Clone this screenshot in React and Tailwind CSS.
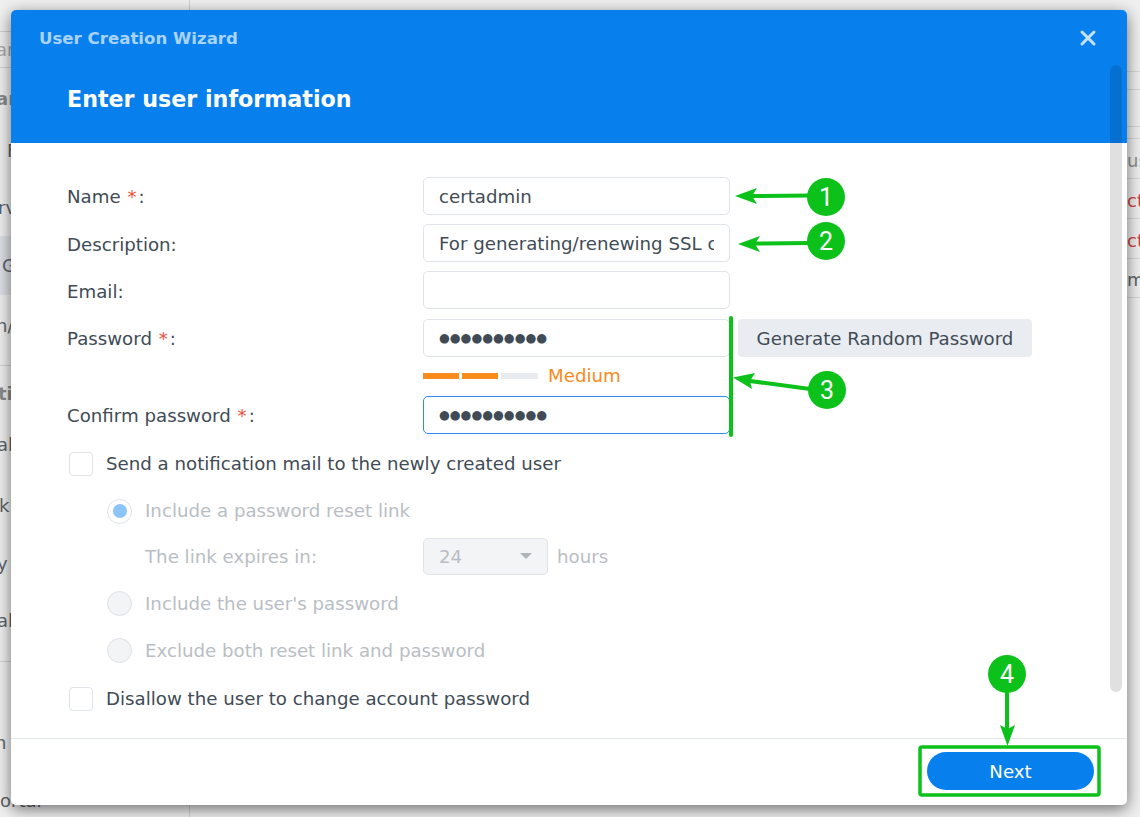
import React from 'react';
import { X } from 'lucide-react';

const font = { fontFamily: '"DejaVu Sans", sans-serif' };

const leftRows = [
    { h: 'h-[31px]', text: '' },
    { h: 'h-[37px] border-t border-b border-[#d2d2d2]', text: 'ar', cls: 'text-[#a9a9a9] -ml-[4px]' },
    { h: 'h-[60px]', text: 'ar', cls: 'text-[#8b8b8b] font-bold -ml-[4px]' },
    { h: 'h-[44px]', text: 'F', cls: 'text-[#5e646a] ml-[7px]' },
    { h: 'h-[64px] pt-[6px]', text: 'rv', cls: 'text-[#5e646a] -ml-[2px]' },
    { h: 'h-[59px] bg-[#dde1e7]', text: 'G', cls: 'text-[#5e646a] ml-[2px]' },
    { h: 'h-[60px]', text: 'n/', cls: 'text-[#5e646a] -ml-[4px]' },
    { h: 'h-[11px] border-b border-[#d2d2d2]', text: '' },
    { h: 'h-[54px]', text: 'ti', cls: 'text-[#8b8b8b] font-bold -ml-[2px]' },
    { h: 'h-[48px]', text: 'al', cls: 'text-[#5e646a] -ml-[3px]' },
    { h: 'h-[74px]', text: 'k', cls: 'text-[#5e646a] -ml-[1px]' },
    { h: 'h-[42px]', text: 'y', cls: 'text-[#5e646a] -ml-[3px]' },
    { h: 'h-[72px]', text: 'al', cls: 'text-[#5e646a] -ml-[3px]' },
    { h: 'h-[6px] border-b border-[#d2d2d2]', text: '' },
    { h: 'h-[50px]', text: '' },
    { h: 'h-[60px]', text: 'n', cls: 'text-[#5e646a] -ml-[5px]' },
    { h: 'h-[56px]', text: 'ortal', cls: 'text-[#5e646a]' },
];

const rightRows = [
    { h: 'h-[71px]', text: '' },
    { h: 'h-[18px] border-t border-[#d8d8d8]', text: '' },
    { h: 'h-[37px] border-t border-[#d8d8d8]', text: '' },
    { h: 'h-[12px] border-t border-[#d8d8d8]', text: '' },
    { h: 'h-[40px] pt-[3px] border-t border-[#d8d8d8]', text: 'us', cls: 'text-[#8d9195]' },
    { h: 'h-[40px] pt-[3px] border-t border-[#d8d8d8]', text: 'ct', cls: 'text-[#d23f3f]' },
    { h: 'h-[40px] pt-[3px] border-t border-[#d8d8d8]', text: 'ct', cls: 'text-[#d23f3f]' },
    { h: 'h-[40px] pt-[3px] border-t border-b border-[#d8d8d8]', text: 'ma', cls: 'text-[#5e646a]' },
];

function BackRow({ row }) {
    return (
        <div className={`${row.h} flex items-center whitespace-nowrap text-[18px]`}>
            {row.text && <span className={row.cls}>{row.text}</span>}
        </div>
    );
}

function TextInput({ value = '' }) {
    return (
        <input
            readOnly
            type="text"
            value={value}
            style={font}
            className="w-[307px] h-[38px] px-[15px] border border-[#dfe4ea] rounded-[5px] bg-white text-[18.2px] text-[#414b55] outline-none"
        />
    );
}

function PasswordBox({ focused }) {
    return (
        <div className={`w-[307px] h-[38px] px-[15px] pt-[2px] flex items-center border rounded-[5px] bg-white text-[12.4px] text-[#414b55] ${focused ? 'border-[#2b8bee]' : 'border-[#dfe4ea]'}`}>
            ●●●●●●●●●●
        </div>
    );
}

function Label({ children, required }) {
    return (
        <div className="w-[356px] shrink-0 pt-[2px] text-[#414b55]">
            {children}
            {required && <span className="text-[#e8503a] ml-[1px]"> *</span>}
            <span className={required ? 'ml-[2px]' : ''}>:</span>
        </div>
    );
}

function Check({ children, className = '' }) {
    return (
        <div className={`h-[38px] pl-[2px] flex items-center gap-[13px] text-[#414b55] ${className}`}>
            <span className="w-[24px] h-[24px] border border-[#dfe4ea] rounded-[4px] bg-white" />
            {children}
        </div>
    );
}

function Radio({ children, selected }) {
    return (
        <div className="h-[38px] pl-[40px] flex items-center gap-[13px] text-[#b9bec4]">
            <span className={`w-[25px] h-[25px] border border-[#dde2e8] rounded-full flex items-center justify-center ${selected ? 'bg-white' : 'bg-[#f2f4f6]'}`}>
                {selected && <span className="w-[14px] h-[14px] rounded-full bg-[#8cc4fa]" />}
            </span>
            {children}
        </div>
    );
}

function Annotations() {
    const green = '#0bc11a';
    const bubble = (cx, cy, n) => (
        <g>
            <circle cx={cx} cy={cy} r="19" fill={green} />
            <text x={cx} y={cy + 9} textAnchor="middle" fill="#fff" fontSize="25" fontFamily="Roboto, sans-serif">{n}</text>
        </g>
    );
    return (
        <svg width="1140" height="817" className="absolute left-0 top-0 pointer-events-none">
            {/* arrow 1 */}
            <path d="M810 195.500 L752 196" stroke={green} strokeWidth="4" />
            <path d="M735 196 L757 188 L752 196 L757 204 Z" fill={green} />
            {bubble(826, 197, 1)}
            {/* arrow 2 */}
            <path d="M810 243 L754 243.500" stroke={green} strokeWidth="4" />
            <path d="M738 244 L760 236 L755 244 L760 252 Z" fill={green} />
            {bubble(826, 241, 2)}
            {/* password bracket + arrow 3 */}
            <path d="M731 318 L731 435" stroke={green} strokeWidth="4" strokeLinecap="round" />
            <path d="M810 389 L750 381" stroke={green} strokeWidth="4" />
            <path d="M733 377.500 L755 373 L750 381 L752 389 Z" fill={green} />
            {bubble(827, 390, 3)}
            {/* arrow 4 + next frame */}
            <path d="M1007 690 L1007 730" stroke={green} strokeWidth="4" />
            <path d="M1007.500 746 L1000 725 L1007.500 729 L1015 725 Z" fill={green} />
            {bubble(1007, 674, 4)}
            <rect x="920" y="747" width="179" height="48" rx="2" fill="none" stroke={green} strokeWidth="3.500" />
        </svg>
    );
}

export default function App() {
    return (
        <div className="relative w-[1140px] h-[817px] overflow-hidden bg-[#f0f0f0]" style={font}>
            {/* page behind the dialog */}
            <div className="flex h-full">
                <div className="w-[190px] border-r border-[#d2d2d2] overflow-hidden">
                    {leftRows.map((row, i) => <BackRow key={i} row={row} />)}
                </div>
                <div className="flex-1" />
                <div className="w-[13px] overflow-hidden">
                    {rightRows.map((row, i) => <BackRow key={i} row={row} />)}
                </div>
            </div>

            {/* dialog */}
            <div className="absolute left-[11px] top-[10px] w-[1116px] h-[795px] flex flex-col bg-white rounded-[5px] overflow-hidden shadow-[0_4px_16px_rgba(0,0,0,0.55)] text-[18.2px]">
                <div className="h-[133px] shrink-0 bg-[#0780ee] pl-[28px] pr-[27px] pt-[17px]">
                    <div className="flex items-center justify-between h-[22px]">
                        <span className="pt-[3px] text-[16.6px] font-bold text-[#a9d3fb]">User Creation Wizard</span>
                        <X size={24} strokeWidth={3} color="#c6e1fc" />
                    </div>
                    <div className="mt-[33px] ml-[28px] text-[22.2px] leading-[34px] font-bold text-white">Enter user information</div>
                </div>

                <div className="flex-1 pl-[56px] pt-[34px] flex flex-col gap-[9.2px]">
                    <div className="h-[38px] flex items-center">
                        <Label required>Name</Label>
                        <TextInput value="certadmin" />
                    </div>
                    <div className="h-[38px] flex items-center">
                        <Label>Description</Label>
                        <TextInput value="For generating/renewing SSL certificates" />
                    </div>
                    <div className="h-[38px] flex items-center">
                        <Label>Email</Label>
                        <TextInput />
                    </div>
                    <div>
                        <div className="h-[38px] flex items-center">
                            <Label required>Password</Label>
                            <PasswordBox />
                            <button className="ml-[8px] w-[294px] h-[38px] pt-[2px] bg-[#e9edf2] rounded-[4px] text-[#414b55]">Generate Random Password</button>
                        </div>
                        <div className="h-[30px] pt-[8px] pl-[356px] flex items-center gap-[3px]">
                            <span className="w-[36px] h-[6px] bg-[#f98a1c]" />
                            <span className="w-[36px] h-[6px] bg-[#f98a1c]" />
                            <span className="w-[37px] h-[6px] bg-[#e8ecf1]" />
                            <span className="ml-[7px] text-[#f98a1c]">Medium</span>
                        </div>
                    </div>
                    <div className="h-[38px] flex items-center">
                        <Label required>Confirm password</Label>
                        <PasswordBox focused />
                    </div>

                    <Check className="mt-[2px]">Send a notification mail to the newly created user</Check>
                    <Radio selected>Include a password reset link</Radio>
                    <div className="h-[38px] -mt-[2px] pl-[78px] flex items-center text-[#b9bec4]">
                        <div className="w-[278px]">The link expires in:</div>
                        <div className="w-[125px] h-[37px] px-[15px] flex items-center justify-between border border-[#dfe4ea] rounded-[5px] bg-[#f2f4f6]">
                            24
                            <span className="w-0 h-0 border-x-[6px] border-x-transparent border-t-[6px] border-t-[#aeb4ba]" />
                        </div>
                        <div className="ml-[9px]">hours</div>
                    </div>
                    <Radio>Include the user's password</Radio>
                    <Radio>Exclude both reset link and password</Radio>
                    <Check className="mt-[1px]">Disallow the user to change account password</Check>
                </div>

                <div className="h-[67px] shrink-0 border-t border-[#e3e8ee] flex justify-end items-start pt-[13px] pr-[33px]">
                    <button className="w-[167px] h-[38px] pt-[1px] rounded-full bg-[#0780ee] text-white font-medium">Next</button>
                </div>

                {/* scrollbar over the dialog */}
                <div className="absolute left-[1099px] top-[55px] w-[12px] h-[627px] rounded-full bg-black/12" />
            </div>

            <Annotations />
        </div>
    );
}
